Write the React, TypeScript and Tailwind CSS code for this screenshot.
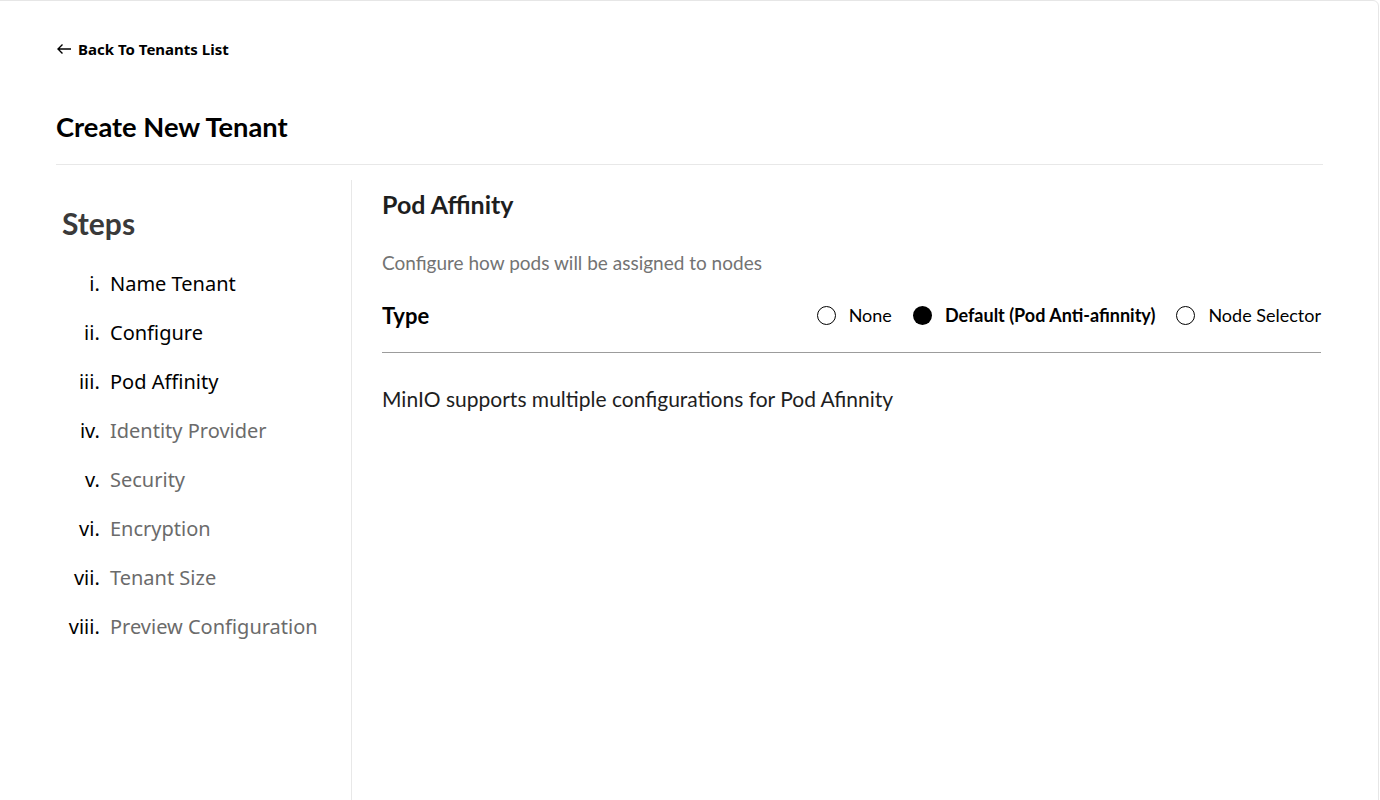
import React from "react";

const steps = [
  { label: "Name Tenant", done: true },
  { label: "Configure", done: true },
  { label: "Pod Affinity", done: true },
  { label: "Identity Provider", done: false },
  { label: "Security", done: false },
  { label: "Encryption", done: false },
  { label: "Tenant Size", done: false },
  { label: "Preview Configuration", done: false },
];

function Radio({ label, checked }: { label: string; checked?: boolean }) {
  return (
    <label className="flex items-center gap-[13px]">
      <span
        className={
          checked
            ? "w-[19px] h-[19px] rounded-full bg-black"
            : "w-[19px] h-[19px] rounded-full border-[1.5px] border-black bg-white"
        }
      />
      <span className={checked ? "text-[18px] font-bold text-black" : "text-[18px] text-black"}>{label}</span>
    </label>
  );
}

export default function App() {
  return (
    <div className="w-[1380px] h-[800px] bg-white overflow-hidden font-['Lato',sans-serif]">
      <div className="ml-[-2px] w-[1381px] h-[810px] border border-[#e6e6e6] rounded-tr-[6px] pl-[57px] pr-[55px]">
        <div className="h-[97px] pt-[36px]">
          <a className="inline-flex items-center gap-[6px] font-['Noto_Sans',sans-serif] text-[15px] font-bold text-black">
            <svg width="16" height="12" viewBox="0 0 16 12" fill="none" stroke="black" strokeWidth="1.4">
              <path d="M15 6H2M6.5 1.5L2 6l4.5 4.5" />
            </svg>
            Back To Tenants List
          </a>
        </div>
        <h1 className="text-[27.3px] font-bold text-black leading-[58px] h-[67px] border-b border-[#e8e8e8]">
          Create New Tenant
        </h1>
        <div className="flex pt-[15px]">
          <div className="w-[296px] border-r border-[#e8e8e8] h-[700px] pl-[6px]">
            <h2 className="text-[30px] font-bold text-[#3a3a3a] leading-[36px] mt-[25px]">Steps</h2>
            <ol className="list-[lower-roman] pl-[43px] mt-[18px] font-['Noto_Sans',sans-serif] text-[20px]">
              {steps.map((s) => (
                <li
                  key={s.label}
                  className={
                    s.done
                      ? "h-[49px] leading-[49px] text-black pl-[5px] marker:text-black"
                      : "h-[49px] leading-[49px] text-[#6b6b6b] pl-[5px] marker:text-black"
                  }
                >
                  {s.label}
                </li>
              ))}
            </ol>
          </div>
          <div className="flex-1 pl-[30px] pr-[2px]">
            <h3 className="text-[25px] font-bold text-[#1e1e1e] leading-[30px] mt-[9px]">Pod Affinity</h3>
            <p className="text-[19px] text-[#737373] mt-[32px] leading-[24px]">Configure how pods will be assigned to nodes</p>
            <div className="flex items-center justify-between h-[74px] border-b border-[#9c9c9c] mt-[4px]">
              <span className="text-[22px] font-bold text-black">Type</span>
              <div className="flex items-center gap-[21px]">
                <Radio label="None" />
                <Radio label="Default (Pod Anti-afinnity)" checked />
                <Radio label="Node Selector" />
              </div>
            </div>
            <p className="text-[21px] text-[#1e1e1e] mt-[32px] leading-[28px]">MinIO supports multiple configurations for Pod Afinnity</p>
          </div>
        </div>
      </div>
    </div>
  );
}
